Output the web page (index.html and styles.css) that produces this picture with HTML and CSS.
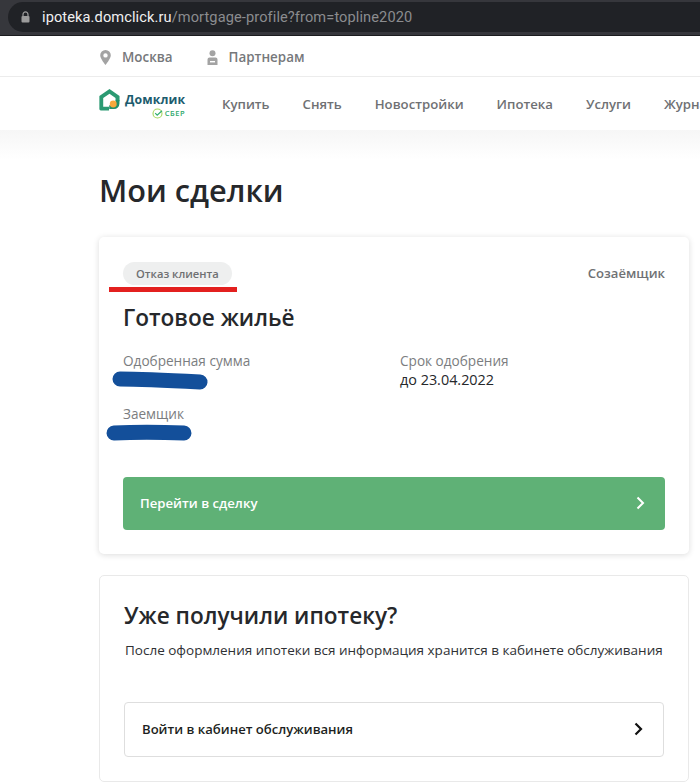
FILE: index.html
```html
<!DOCTYPE html>
<html lang="ru">
<head>
<meta charset="utf-8">
<title>Мои сделки</title>
<link rel="stylesheet" href="styles.css">
</head>
<body>
<div class="browser">
  <div class="urlpill">
    <svg class="lock" width="9" height="12" viewBox="0 0 9 12"><path d="M2 5V3.400a2.500 2.500 0 0 1 5 0V5" fill="none" stroke="#9b9b9b" stroke-width="1.200"/><rect x="0.500" y="5" width="8" height="6.500" rx="1" fill="#9b9b9b"/></svg>
    <span class="host">ipoteka.domclick.ru</span><span class="path">/mortgage-profile?from=topline2020</span>
  </div>
</div>
<div class="topbar">
  <div class="topitem">
    <svg width="11" height="15" viewBox="0 0 11 15"><path fill-rule="evenodd" d="M5.500 0A5.300 5.300 0 0 0 .2 5.300C.2 8.800 5.500 15 5.500 15s5.300-6.200 5.300-9.700A5.300 5.300 0 0 0 5.500 0zm0 3.200a2.200 2.200 0 1 1 0 4.400 2.200 2.200 0 0 1 0-4.400z" fill="#a3a3a3"/></svg>
    <span>Москва</span>
  </div>
  <div class="topitem">
    <svg width="11" height="15" viewBox="0 0 11 15"><circle cx="5.500" cy="3.200" r="3" fill="#a3a3a3"/><path d="M0.500 15V9.500A2 2 0 0 1 2.500 7.500h6a2 2 0 0 1 2 2V15z" fill="#a3a3a3"/><rect x="3" y="11" width="5" height="1.400" fill="#fff"/></svg>
    <span>Партнерам</span>
  </div>
</div>
<nav class="nav">
  <div class="logo">
    <svg class="logomark" width="21" height="24" viewBox="0 0 23 25"><path d="M11.500 0.500 22.500 8v6h-4.400V10.200L11.500 5.700 4.600 10.200v9.600h6.400V24H2a1.600 1.600 0 0 1-1.600-1.600V8z" fill="#2b9a72"/><path d="M18.200 12.400h4.200v4a6 6 0 0 1-6 6h-5.200v-4.200h3a4 4 0 0 0 4-5.800z" fill="#1f8f6a"/><circle cx="15.600" cy="16.800" r="3.800" fill="#f5a83c"/></svg>
    <div class="logotext">
      <span class="brand">Домклик</span>
      <span class="sber"><svg width="11" height="11" viewBox="0 0 11 11"><circle cx="5.500" cy="5.500" r="4.500" fill="none" stroke="#a5d65c" stroke-width="1.100"/><path d="M3.200 5.200 5.200 7.200 10 2.800" fill="none" stroke="#2fae6e" stroke-width="1.200"/></svg>СБЕР</span>
    </div>
  </div>
  <div class="navlinks">
    <a>Купить</a><a>Снять</a><a>Новостройки</a><a>Ипотека</a><a>Услуги</a><a>Журнал</a>
  </div>
</nav>
<main class="page">
  <h1>Мои сделки</h1>
  <section class="card deal">
    <div class="dealhead">
      <span class="badge">Отказ клиента</span>
      <span class="role">Созаёмщик</span>
      <i class="redline"></i>
    </div>
    <h2>Готовое жильё</h2>
    <div class="facts">
      <div class="fact">
        <div class="label">Одобренная сумма</div>
        <div class="value"><svg class="scribble s1" width="96" height="18" viewBox="0 0 96 18"><path d="M8 7C30 7 50 8 88 10" fill="none" stroke="#134f9a" stroke-width="15" stroke-linecap="round"/></svg></div>
        <div class="label second">Заемщик</div>
        <div class="value"><svg class="scribble s2" width="86" height="18" viewBox="0 0 86 18"><path d="M8 9C30 8 50 8 78 9" fill="none" stroke="#134f9a" stroke-width="15" stroke-linecap="round"/></svg></div>
      </div>
      <div class="fact">
        <div class="label">Срок одобрения</div>
        <div class="value">до 23.04.2022</div>
      </div>
    </div>
    <a class="btn green"><span>Перейти в сделку</span><svg width="9" height="14" viewBox="0 0 9 14"><path d="M1.500 1.500 7 7l-5.500 5.500" fill="none" stroke="#fff" stroke-width="2"/></svg></a>
  </section>
  <section class="card plain">
    <h2>Уже получили ипотеку?</h2>
    <p>После оформления ипотеки вся информация хранится в кабинете обслуживания</p>
    <a class="btn outline"><span>Войти в кабинет обслуживания</span><svg width="9" height="14" viewBox="0 0 9 14"><path d="M1.500 1.500 7 7l-5.500 5.500" fill="none" stroke="#111" stroke-width="2.200"/></svg></a>
  </section>
</main>
</body>
</html>
```
FILE: styles.css
```css
* { box-sizing: border-box; }
html, body { margin: 0; padding: 0; }
body {
  width: 700px;
  height: 782px;
  overflow: hidden;
  background: #fff;
  font-family: "Open Sans", "Noto Sans", sans-serif;
  color: #26282b;
}
.browser {
  height: 36px;
  background: #36373c;
  padding: 2px 0 3px 8px;
  border-bottom: 1px solid #1b1c1f;
}
.urlpill {
  height: 30px;
  background: #202226;
  border-radius: 15px 0 0 15px;
  display: flex;
  align-items: center;
  padding-left: 13px;
  font-family: "Roboto", sans-serif;
  font-size: 14.600px;
  letter-spacing: 0.1px;
}
.lock { margin-right: 12px; }
.host { color: #f0f0f0; }
.path { color: #8b8c8f; }
.topbar {
  height: 41px;
  padding: 2px 0 0 100px;
  display: flex;
  align-items: center;
  gap: 34px;
  border-bottom: 1px solid #ececec;
}
.topitem {
  display: flex;
  align-items: center;
  gap: 11px;
  font-size: 13.400px;
  font-weight: 600;
  color: #76787b;
}
.nav {
  height: 53px;
  padding-left: 99px;
  display: flex;
  align-items: center;
  gap: 36px;
  background: #fff;
  white-space: nowrap;
  overflow: hidden;
}
.logo { display: flex; align-items: flex-start; gap: 5px; width: 87px; height: 36px; flex: none; padding-top: 2px; }
.logomark { flex: none; }
.logotext { display: flex; flex-direction: column; align-items: flex-end; line-height: 1; margin-top: 6px; }
.brand { font-size: 12.300px; font-weight: 700; color: #1c5c6e; letter-spacing: 0.1px; }
.sber { display: flex; align-items: center; gap: 2px; font-size: 7.500px; font-weight: 600; color: #2fa96c; letter-spacing: 0.5px; margin-top: 2px; }
.navlinks { display: flex; gap: 33px; }
.navlinks a { font-size: 13.200px; font-weight: 600; color: #6f7174; }
.page {
  height: 652px;
  padding: 0 11px 0 99px;
  background: linear-gradient(#f6f6f6, #fff 30px);
}
h1 {
  margin: 0;
  padding-top: 38px;
  height: 107px;
  font-size: 30.700px;
  line-height: 44px;
  font-weight: 600;
  color: #26282b;
}
.card { background: #fff; border-radius: 5px; }
.deal {
  height: 317px;
  padding: 25px 24px 0;
  box-shadow: 0 1px 6px rgba(0, 0, 0, 0.14);
}
.dealhead {
  position: relative;
  height: 22px;
  display: flex;
  justify-content: space-between;
  align-items: center;
}
.badge {
  height: 23px;
  padding: 0 13px;
  border-radius: 12px;
  background: #eeefef;
  font-size: 11.200px;
  font-weight: 600;
  line-height: 23px;
  color: #6e7072;
}
.role { font-size: 13.100px; font-weight: 600; color: #6f7174; }
.redline {
  position: absolute;
  left: -14px;
  top: 25px;
  width: 128px;
  height: 5px;
  background: #e3201f;
}
h2 {
  margin: 0;
  font-size: 22.600px;
  font-weight: 600;
  line-height: 32px;
}
.deal h2 { margin-top: 18px; }
.facts { display: flex; margin-top: 17px; }
.fact { width: 277px; flex: none; }
.label { font-size: 13.600px; line-height: 19px; color: #7b7d80; }
.label.second { margin-top: 15px; }
.value { font-size: 14.400px; line-height: 20px; height: 19px; color: #26282b; position: relative; }
.scribble { position: absolute; overflow: visible; }
.s1 { left: -11px; top: 2px; }
.s2 { left: -17px; top: 1px; }
.btn {
  display: flex;
  align-items: center;
  justify-content: space-between;
  font-size: 13.200px;
  font-weight: 600;
}
.green {
  height: 53px;
  margin-top: 35px;
  padding: 0 20px 2px 17px;
  border-radius: 4px;
  background: #5fb176;
  color: #fff;
}
.plain {
  height: 207px;
  margin-top: 21px;
  padding: 24px 24px 0;
  border: 1px solid #e9e9e9;
}
.plain p {
  margin: 8px 0 0;
  padding-left: 1px;
  font-size: 13.500px;
  line-height: 20px;
  white-space: nowrap;
  color: #2f3134;
}
.outline {
  height: 55px;
  margin-top: 42px;
  padding: 0 20px 2px 17px;
  border: 1px solid #dedede;
  border-radius: 4px;
  font-size: 13.100px;
  color: #1d1f22;
}
```
